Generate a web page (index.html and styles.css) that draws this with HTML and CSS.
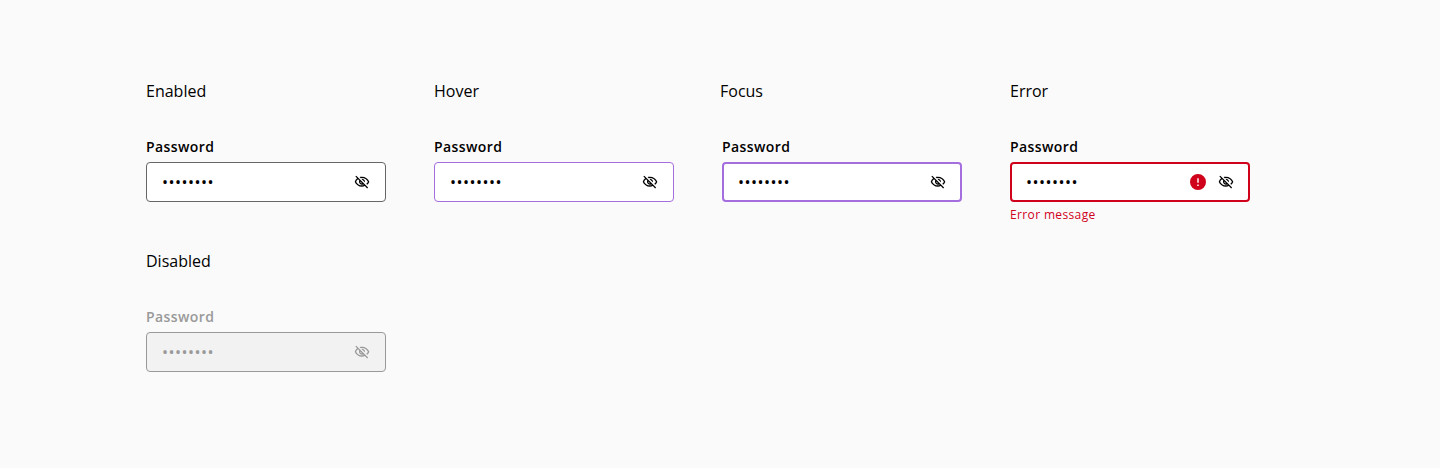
FILE: index.html
```
<!DOCTYPE html>
<html lang="en">
<head>
<meta charset="utf-8">
<title>Password input states</title>
<link rel="stylesheet" href="styles.css">
</head>
<body>
<svg width="0" height="0" class="defs" aria-hidden="true">
<symbol id="eye-off" viewBox="0 0 24 24"><path d="M12 6c3.79 0 7.17 2.13 8.82 5.5-.59 1.22-1.42 2.27-2.41 3.12l1.41 1.41c1.39-1.23 2.49-2.77 3.18-4.53C21.27 7.11 17 4 12 4c-1.27 0-2.49.2-3.64.57l1.65 1.65C10.66 6.09 11.32 6 12 6zm-1.07 1.14L13 9.21c.57.25 1.03.71 1.28 1.28l2.07 2.07c.08-.34.14-.7.14-1.07C16.5 9.01 14.48 7 12 7c-.37 0-.72.05-1.07.14zM2.01 3.87l2.68 2.68C3.06 7.83 1.77 9.53 1 11.5 2.73 15.89 7 19 12 19c1.52 0 2.98-.29 4.32-.82l3.42 3.42 1.41-1.41L3.42 2.45 2.01 3.87zm7.5 7.5l2.61 2.61c-.04.01-.08.02-.12.02-1.38 0-2.5-1.12-2.5-2.5 0-.05.01-.08.01-.13zm-3.4-3.4l1.75 1.75c-.23.55-.36 1.15-.36 1.78 0 2.48 2.02 4.5 4.5 4.5.63 0 1.23-.13 1.77-.36l.98.98c-.88.24-1.8.38-2.75.38-3.79 0-7.17-2.13-8.82-5.5.7-1.43 1.72-2.61 2.93-3.53z"/></symbol>
<symbol id="alert" viewBox="0 0 24 24"><path d="M12 0a12 12 0 1 0 0 24 12 12 0 0 0 0-24zm1.1 18h-2.2v-2.2h2.2V18zm0-4.8h-2.2V6.4h2.2v6.8z"/></symbol>
</svg>
<main class="grid">
<section class="state"><h2 class="title">Enabled</h2><div class="label">Password</div><div class="field"><span class="value">••••••••</span><svg class="icon"><use href="#eye-off"/></svg></div></section>
<section class="state"><h2 class="title">Hover</h2><div class="label">Password</div><div class="field hover"><span class="value">••••••••</span><svg class="icon"><use href="#eye-off"/></svg></div></section>
<section class="state"><h2 class="title shifted">Focus</h2><div class="label">Password</div><div class="field focus"><span class="value">••••••••</span><svg class="icon"><use href="#eye-off"/></svg></div></section>
<section class="state"><h2 class="title">Error</h2><div class="label">Password</div><div class="field error"><span class="value">••••••••</span><svg class="icon alert"><use href="#alert"/></svg><svg class="icon"><use href="#eye-off"/></svg></div><div class="message">Error message</div></section>
<section class="state disabled"><h2 class="title">Disabled</h2><div class="label">Password</div><div class="field"><span class="value">••••••••</span><svg class="icon"><use href="#eye-off"/></svg></div></section>
</main>
</body>
</html>
```
FILE: styles.css
```
* { box-sizing: border-box; }
body { margin: 0; background: #fafafa; color: #000; font-family: "Open Sans", sans-serif; }
.defs { display: none; }
.grid { display: grid; grid-template-columns: repeat(4, 240px); grid-auto-rows: 170px; column-gap: 48px; padding: 79px 0 0 146px; }
.title { margin: 0 0 34px; font-size: 16px; line-height: 24px; font-weight: 400; }
.shifted { margin-left: -2px; }
.label { font-size: 14px; line-height: 20px; font-weight: 600; letter-spacing: 0.4px; margin-bottom: 5px; }
.field { display: flex; align-items: center; height: 40px; padding: 0 15px; border: 1px solid #666; border-radius: 4px; background: #fff; }
.value { flex: 1; font-size: 16px; line-height: 24px; letter-spacing: 0.48px; }
.icon { width: 16px; height: 16px; fill: currentColor; }
.alert { color: #d0011b; margin-right: 12px; }
.hover { border-color: #a46ede; }
.focus { border: 2px solid #a46ede; padding: 0 14px; }
.error { border: 2px solid #d0011b; padding: 0 14px; }
.message { margin-top: 4px; color: #d0011b; font-size: 12px; line-height: 18px; letter-spacing: 0.36px; }
.disabled .label { color: #999; }
.disabled .field { color: #999; border-color: #999; background: #f2f2f2; }
```
